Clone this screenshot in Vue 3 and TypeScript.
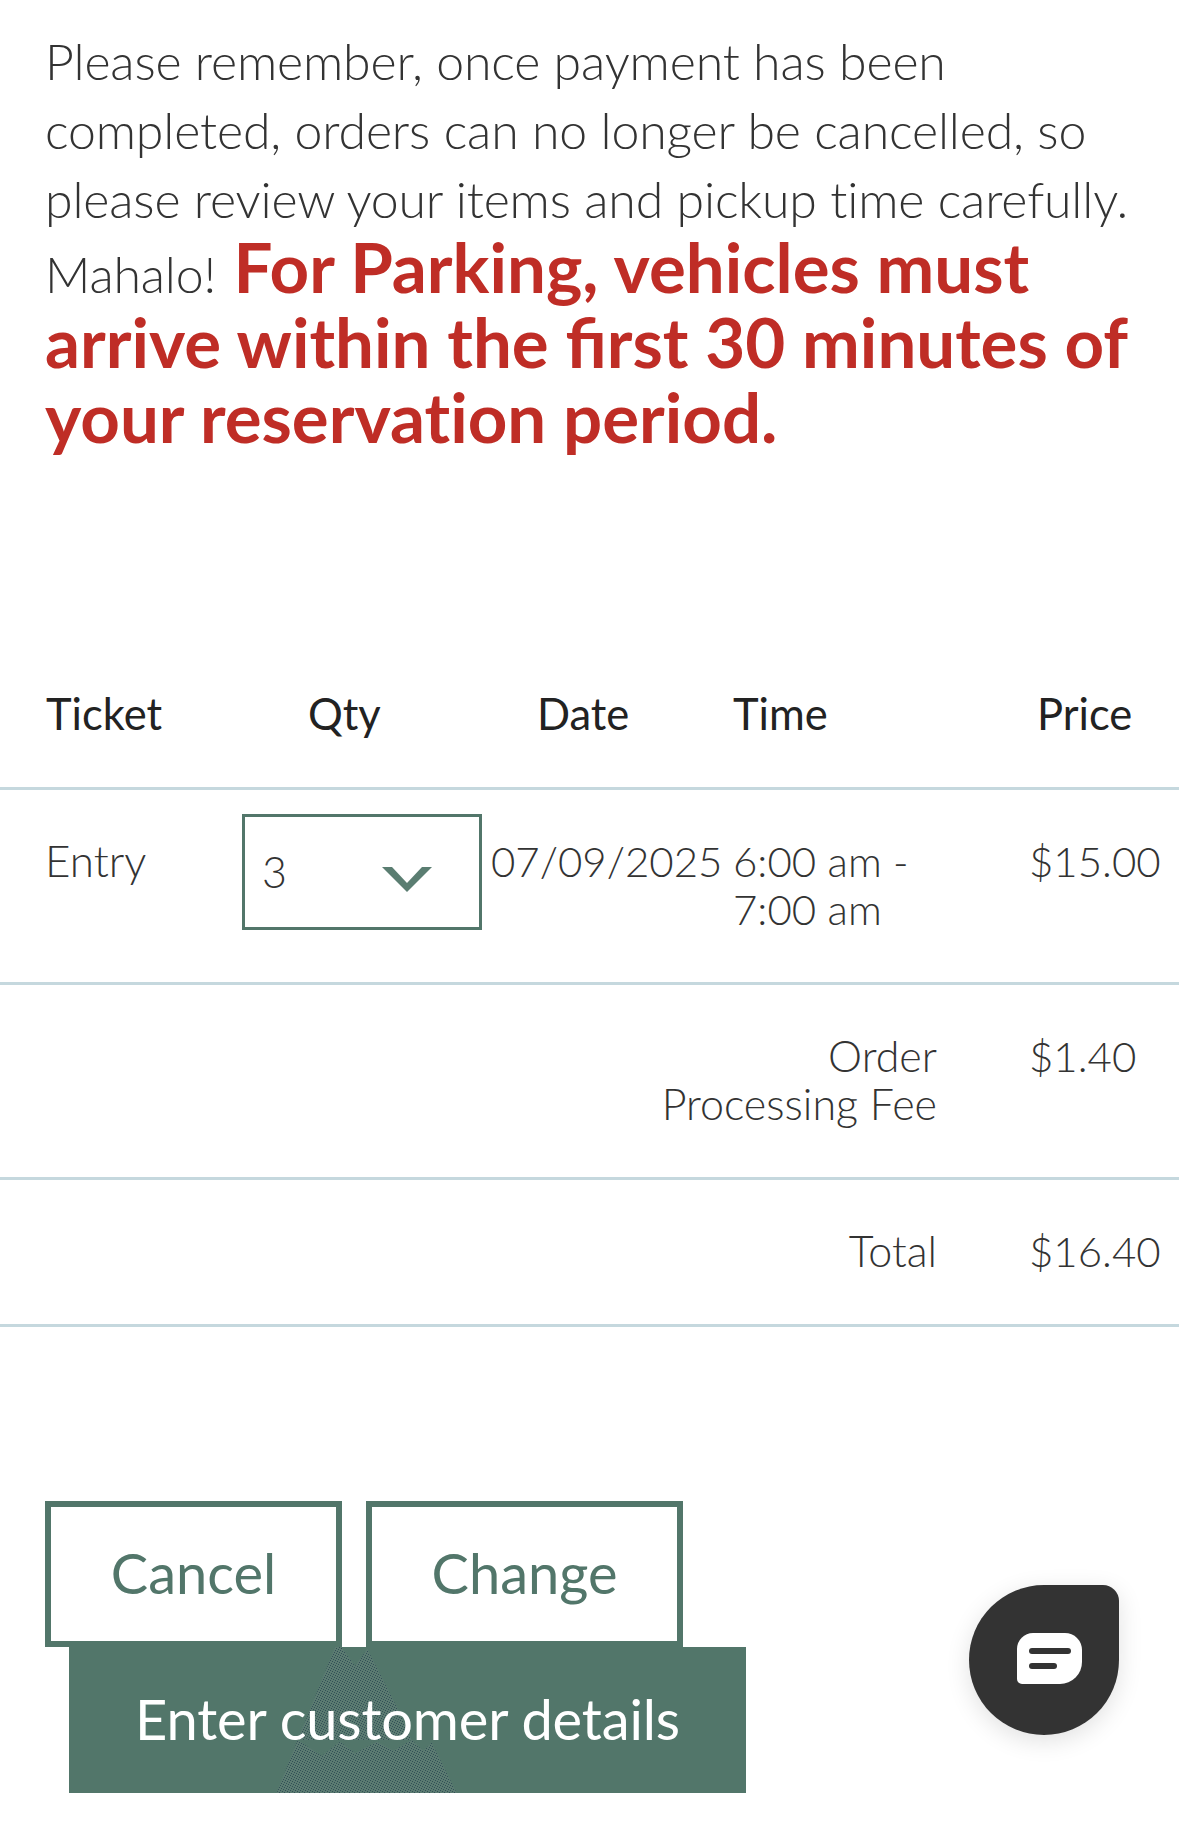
<script setup lang="ts">
interface Row {
  ticket: string
  qty: string
  date: string
  time: string[]
  price: string
}
const row: Row = {
  ticket: 'Entry',
  qty: '3',
  date: '07/09/2025',
  time: ['6:00 am -', '7:00 am'],
  price: '$15.00',
}
</script>

<template>
  <main class="page">
    <p class="notice">
      Please remember, once payment has been<br />completed, orders can no longer be cancelled, so<br />please review your items and pickup time carefully.<br />Mahalo!
      <strong class="warn">For Parking, vehicles must arrive within the <span class="lig">first</span> 30 minutes of your reservation period.</strong>
    </p>

    <section class="cart">
      <div class="row head">
        <div class="c1">Ticket</div>
        <div class="c2">Qty</div>
        <div class="c3">Date</div>
        <div class="c4">Time</div>
        <div class="c5">Price</div>
      </div>
      <div class="row item">
        <div class="c1 entry">{{ row.ticket }}</div>
        <div class="c2">
          <div class="select">
            <span>{{ row.qty }}</span>
            <svg class="chev" width="50" height="25" viewBox="0 0 50 25"><path d="M0 0h10l15 16L40 0h10L25 25z" fill="#5a7d71" /></svg>
          </div>
        </div>
        <div class="c3">{{ row.date }}</div>
        <div class="c4">{{ row.time[0] }}<br />{{ row.time[1] }}</div>
        <div class="c5">{{ row.price }}</div>
      </div>
      <div class="row item fee">
        <div class="label">Order<br />Processing Fee</div>
        <div class="c5">$1.40</div>
      </div>
      <div class="row item total">
        <div class="label">Total</div>
        <div class="c5">$16.40</div>
      </div>
    </section>

    <div class="actions">
      <button class="btn outline cancel">Cancel</button>
      <button class="btn outline change">Change</button>
      <button class="btn solid">
        <svg class="glitch" width="677" height="146" viewBox="0 0 677 146">
          <defs>
            <pattern id="dots" width="5" height="5" patternUnits="userSpaceOnUse">
              <rect width="5" height="5" fill="#5b7b71" />
              <rect width="1" height="1" fill="#324e56" />
              <rect x="2" y="1" width="1" height="1" fill="#324e56" />
              <rect x="4" y="2" width="1" height="1" fill="#324e56" />
              <rect x="1" y="3" width="1" height="1" fill="#324e56" />
              <rect x="3" y="4" width="1" height="1" fill="#324e56" />
            </pattern>
          </defs>
          <path
            d="M268.3-5.3L286 19l12.3-17 29.4 57.7L342.7 93H228.7zM207.7 146L228.7 93l24 16 18.3-14.3 15 11.6 21.7-11.6 16.6 9 18.4-10.7 11.6 10.7 8.4-8L387.7 146z"
            fill="url(#dots)"
          />
        </svg>
        <span class="solid-label">Enter customer details</span>
      </button>
    </div>

    <div class="chat">
      <svg width="65" height="51" viewBox="0 0 65 51">
        <path d="M16 0h32a17 17 0 0 1 17 17v12a22 22 0 0 1-22 22H5a5 5 0 0 1-5-5V16A16 16 0 0 1 16 0z" fill="#fff" />
        <rect x="12" y="15" width="42" height="6" rx="3" fill="#333" />
        <rect x="12" y="30" width="28" height="6" rx="3" fill="#333" />
      </svg>
    </div>
  </main>
</template>

<style scoped>
.page {
  position: relative;
  width: 1179px;
  height: 1844px;
  background: #fff;
  overflow: hidden;
  font-family: Lato, "Liberation Sans", sans-serif;
  font-variant-ligatures: none;
  color: #333;
}
.notice {
  margin: 0;
  padding: 27px 0 0 45px;
  width: 1140px;
  font-size: 50px;
  font-weight: 300;
  letter-spacing: -0.14px;
  line-height: 69px;
  height: 632px;
  box-sizing: border-box;
}
.warn {
  margin-left: 4px;
  font-size: 69px;
  line-height: 66px;
  letter-spacing: 0;
  font-weight: 700;
  color: #bf2d26;
}
.lig { font-variant-ligatures: common-ligatures; }
.row {
  display: grid;
  grid-template-columns: 242px 249px 242px 296px 150px;
  border-bottom: 3px solid #c5d8de;
  font-size: 42px;
  font-weight: 300;
  line-height: 48px;
  box-sizing: border-box;
}
.c1 { padding-left: 45px; }
.entry { font-size: 44px; line-height: 46px; }
.label { font-size: 43px; }
.head {
  height: 158px;
  padding-top: 57px;
  font-size: 43.5px;
  font-weight: 400;
  color: #222;
}
.head .c1 { padding-left: 46px; }
.head .c2 { padding-left: 66px; }
.head .c3 { padding-left: 46px; }
.head .c5 { padding-left: 8px; }
.item {
  height: 195px;
  padding-top: 47px;
}
.select {
  width: 240px;
  height: 116px;
  margin-top: -23px;
  border: 3px solid #52766a;
  box-sizing: border-box;
  display: flex;
  align-items: center;
  justify-content: space-between;
  padding: 0 47px 0 17px;
  font-size: 43px;
}
.chev { margin-top: 14px; }
.fee, .total { grid-template-columns: 937px 92px 150px; }
.fee .label, .total .label { text-align: right; }
.fee .c5, .total .c5 { grid-column: 3; }
.total { height: 147px; }
.actions {
  display: flex;
  flex-wrap: wrap;
  margin: 174px 0 0 45px;
  width: 720px;
}
.btn {
  font-family: inherit;
  box-sizing: border-box;
  height: 146px;
  font-size: 56px;
  padding: 0 0 4px;
  border-radius: 0;
}
.outline {
  background: #fff;
  border: 6px solid #52766a;
  color: #52766a;
}
.cancel { width: 297px; margin-right: 24px; }
.change { width: 317px; }
.solid {
  position: relative;
  width: 677px;
  margin-left: 24px;
  background: #52766a;
  border: 0;
  color: #fff;
  letter-spacing: -0.15px;
}
.glitch { position: absolute; left: 0; top: 0; }
.solid-label { position: relative; }
.chat {
  position: absolute;
  left: 969px;
  top: 1585px;
  width: 150px;
  height: 150px;
  background: #333;
  border-radius: 50% 16px 50% 50%;
  box-shadow: 0 6px 24px rgba(0, 0, 0, 0.12);
  display: flex;
  align-items: center;
  justify-content: center;
}
.chat svg { margin: 0 0 3px 11px; }
</style>
